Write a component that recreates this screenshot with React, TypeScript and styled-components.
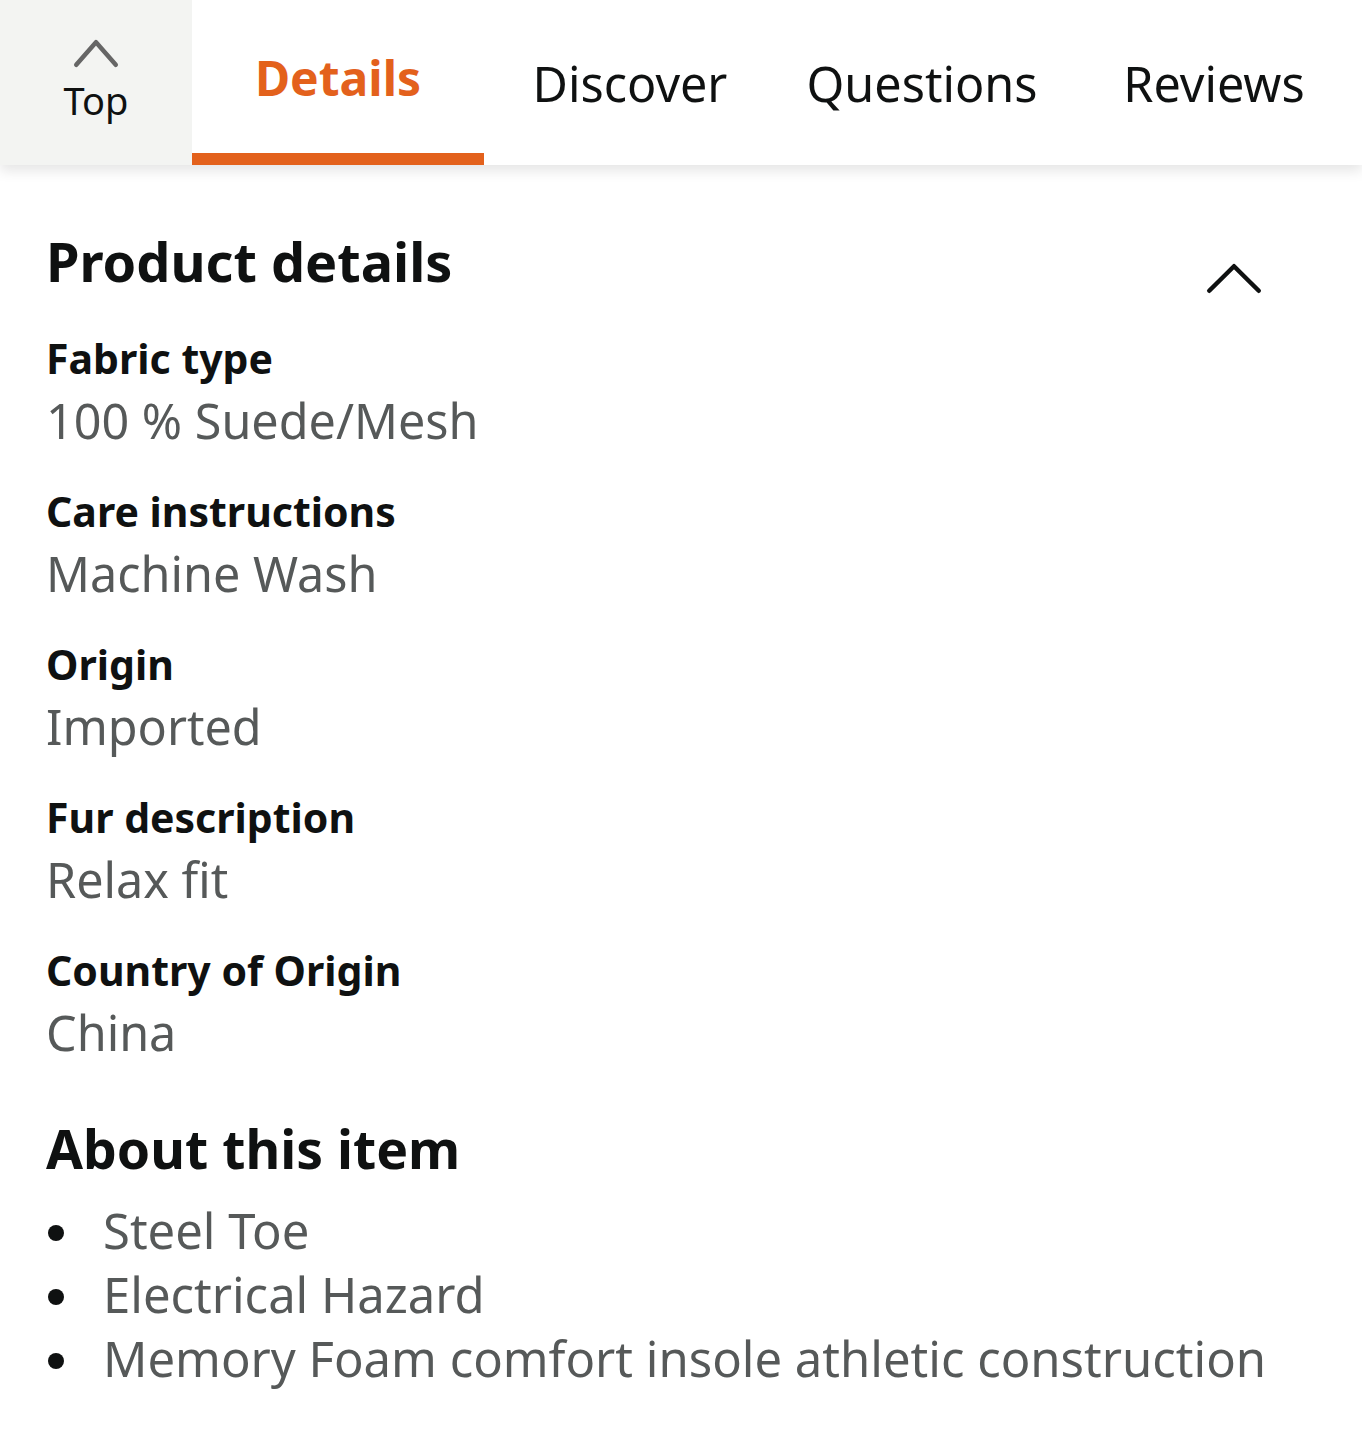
import React from "react";
import styled, { createGlobalStyle } from "styled-components";

const GlobalStyle = createGlobalStyle`
	body {
		margin: 0;
		background: #ffffff;
		font-family: "Noto Sans", "Open Sans", sans-serif;
		color: #0f1111;
	}
`;

const TabBar = styled.nav`
	display: flex;
	height: 165px;
	background: #ffffff;
	box-shadow: 0 6px 12px rgba(0, 0, 0, 0.1);
	position: relative;
	z-index: 1;
`;

const TopTab = styled.div`
	width: 192px;
	background: #f3f4f2;
	display: flex;
	flex-direction: column;
	align-items: center;
	padding-top: 39px;
	box-sizing: border-box;
	font-size: 38px;
	color: #0f1111;
	line-height: 1;
	gap: 13px;
`;

const Tab = styled.div<{ $active?: boolean }>`
	width: 292px;
	display: flex;
	justify-content: center;
	box-sizing: border-box;
	line-height: 1;
	font-size: ${(p) => (p.$active ? "48px" : "48.5px")};
	font-weight: ${(p) => (p.$active ? 700 : 400)};
	color: ${(p) => (p.$active ? "#e3611c" : "#0f1111")};
	border-bottom: 12px solid ${(p) => (p.$active ? "#e3611c" : "transparent")};
	padding-top: ${(p) => (p.$active ? "54px" : "59px")};
`;

const Content = styled.main`
	padding: 61px 20px 0 46px;
`;

const SectionHeader = styled.div`
	display: flex;
	justify-content: space-between;
	align-items: flex-start;
`;

const Heading = styled.h2`
	margin: 0;
	font-size: 54px;
	font-weight: 700;
	line-height: 70px;
`;

const Collapse = styled.div`
	padding-top: 37px;
	margin-right: 80px;
`;

const Field = styled.div`
	margin-top: 34px;
`;

const Label = styled.div`
	font-size: 41px;
	font-weight: 700;
	line-height: 50px;
`;

const Value = styled.div`
	margin-top: 5px;
	font-size: 48.5px;
	color: #565959;
	line-height: 64px;
`;

const AboutHeading = styled(Heading)`
	margin-top: 50px;
	font-size: 53.5px;
`;

const Bullets = styled.ul`
	margin: 14px 0 0;
	padding: 0;
	list-style: none;
`;

const Bullet = styled.li`
	display: flex;
	align-items: center;
	font-size: 49px;
	line-height: 64px;
	color: #565959;
	white-space: nowrap;

	&::before {
		content: "";
		width: 16px;
		height: 16px;
		border-radius: 50%;
		background: #0f1111;
		margin: 6px 39px 0 2px;
		flex-shrink: 0;
	}
`;

function Chevron(props: { w: number; h: number; color: string; stroke: number }) {
	const { w, h, stroke } = props;
	const s = stroke / 2 + 1;
	return (
		<svg width={w} height={h} viewBox={`0 0 ${w} ${h}`} fill="none">
			<path
				d={`M${s} ${h - s} L${w / 2} ${s} L${w - s} ${h - s}`}
				stroke={props.color}
				strokeWidth={stroke}
				strokeLinecap="round"
				strokeLinejoin="round"
			/>
		</svg>
	);
}

const details = [
	["Fabric type", "100 % Suede/Mesh"],
	["Care instructions", "Machine Wash"],
	["Origin", "Imported"],
	["Fur description", "Relax fit"],
	["Country of Origin", "China"],
];

const about = [
	"Steel Toe",
	"Electrical Hazard",
	"Memory Foam comfort insole athletic construction",
];

export default function App() {
	return (
		<>
			<GlobalStyle />
			<TabBar>
				<TopTab>
					<Chevron w={46} h={29} color="#666666" stroke={4.5} />
					<span>Top</span>
				</TopTab>
				<Tab $active>Details</Tab>
				<Tab>Discover</Tab>
				<Tab>Questions</Tab>
				<Tab>Reviews</Tab>
			</TabBar>
			<Content>
				<SectionHeader>
					<Heading>Product details</Heading>
					<Collapse>
						<Chevron w={56} h={31} color="#0f1111" stroke={4.5} />
					</Collapse>
				</SectionHeader>
				{details.map(([label, value]) => (
					<Field key={label}>
						<Label>{label}</Label>
						<Value>{value}</Value>
					</Field>
				))}
				<AboutHeading>About this item</AboutHeading>
				<Bullets>
					{about.map((item) => (
						<Bullet key={item}>{item}</Bullet>
					))}
				</Bullets>
			</Content>
		</>
	);
}
